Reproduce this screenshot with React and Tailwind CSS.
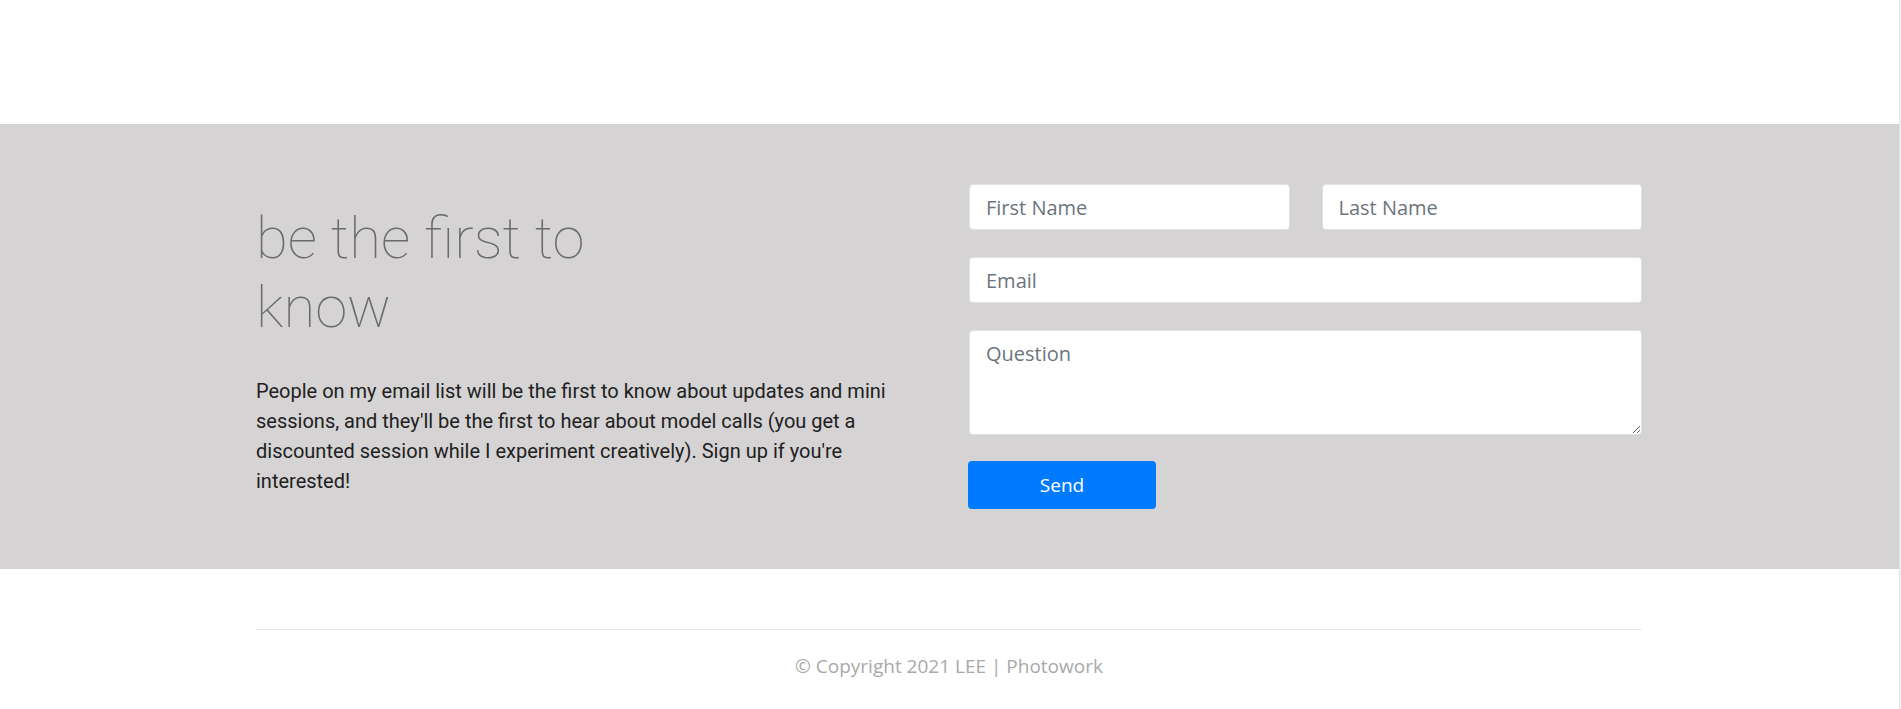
import React from 'react';

const inputCls =
  "w-full h-[46px] rounded bg-white border border-[#e2e2e2] px-4 text-[20px] text-[#495057] placeholder-[#6c757d] focus:outline-none";

const App = () => {
  return (
    <div className="min-h-screen w-full flex bg-white">
      <div className="flex-1 pt-[124px]">
        {/* Signup band */}
        <section className="bg-[#d5d3d4] h-[445px]">
          <div className="ml-[256px] mr-[257px] flex">
            <div className="w-[680px] pt-[80px]">
              <h2
                className="text-[58px] leading-[69px] font-thin text-[#6b6b6b]"
                style={{ fontFamily: 'Roboto, "Liberation Sans", sans-serif' }}
              >
                be the first to
                <br />
                know
              </h2>
              <p
                className="mt-[34px] text-[20px] leading-[30px] text-[#212121] pr-[20px]"
                style={{ fontFamily: 'Roboto, "Liberation Sans", sans-serif' }}
              >
                People on my email list will be the first to know about updates and mini
                sessions, and they'll be the first to hear about model calls (you get a
                discounted session while I experiment creatively). Sign up if you're
                interested!
              </p>
            </div>

            <form
              className="ml-auto w-[673px] pt-[60px] flex flex-col"
              style={{ fontFamily: '"Open Sans", "Noto Sans", sans-serif' }}
              onSubmit={(e) => e.preventDefault()}
            >
              <div className="flex gap-[32px]">
                <input type="text" placeholder="First Name" className={inputCls} />
                <input type="text" placeholder="Last Name" className={inputCls} />
              </div>
              <input type="email" placeholder="Email" className={inputCls + " mt-[27px]"} />
              <textarea
                placeholder="Question"
                className="mt-[27px] w-full h-[105px] rounded bg-white border border-[#e2e2e2] px-4 pt-[8px] text-[20px] text-[#495057] placeholder-[#6c757d] focus:outline-none"
              />
              <button
                type="submit"
                className="mt-[26px] -ml-px w-[188px] h-[48px] rounded bg-[#007bff] text-white text-[19px]"
              >
                Send
              </button>
            </form>
          </div>
        </section>

        {/* Footer */}
        <footer className="ml-[256px] mr-[257px] pt-[60px]">
          <div className="border-t border-[#e6e6e6]" />
          <p
            className="pt-[22px] text-center text-[19px] text-[#a9a9a9]"
            style={{ fontFamily: '"Open Sans", "Noto Sans", sans-serif' }}
          >
            © Copyright 2021 LEE | Photowork
          </p>
        </footer>
      </div>
      <div className="w-[2px] bg-[#efefef] border-l border-[#e4e4e4]" />
    </div>
  );
};

export default App;
